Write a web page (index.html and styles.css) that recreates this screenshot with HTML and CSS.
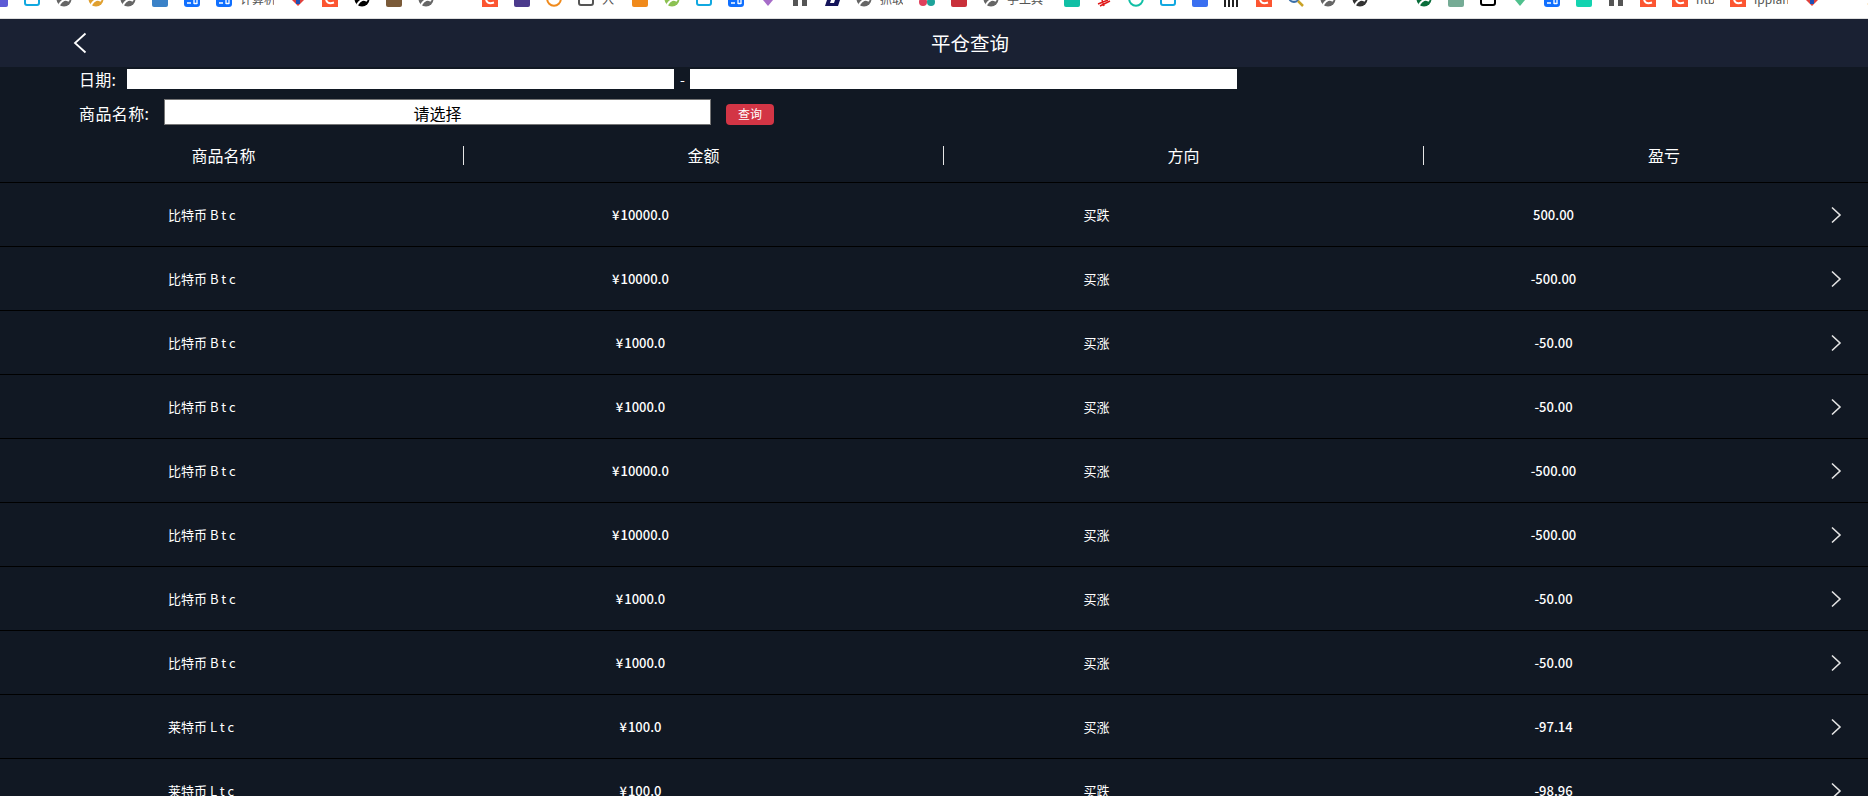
FILE: index.html
```html
<!DOCTYPE html>
<html lang="zh-CN">
<head>
<meta charset="utf-8">
<title>平仓查询</title>
<link rel="stylesheet" href="styles.css">
</head>
<body>
<svg class="defs" width="0" height="0" aria-hidden="true">
  <symbol id="round" viewBox="0 0 16 16"><circle cx="8" cy="8" r="7.5" fill="currentColor"/><path d="M3 14 Q8 6 13 10" stroke="#fff" stroke-width="2" fill="none"/></symbol>
  <symbol id="square" viewBox="0 0 16 16"><rect width="16" height="16" rx="2" fill="currentColor"/></symbol>
  <symbol id="zhi" viewBox="0 0 16 16"><rect width="16" height="16" rx="3" fill="#0f6fff"/><path d="M3 12h4M10 9v4M13 9v4M10 12.500h3" stroke="#fff" stroke-width="1.300" fill="none"/></symbol>
  <symbol id="csdn" viewBox="0 0 16 16"><rect width="16" height="16" fill="#fc5531"/><path d="M12 11.500Q4 14 4 7" stroke="#fff" stroke-width="2" fill="none"/></symbol>
  <symbol id="outline" viewBox="0 0 16 16"><rect x="1" y="-3" width="14" height="17" rx="2" fill="none" stroke="currentColor" stroke-width="2"/></symbol>
  <symbol id="ring" viewBox="0 0 16 16"><circle cx="8" cy="8" r="6.800" fill="none" stroke="currentColor" stroke-width="2"/></symbol>
  <symbol id="tri" viewBox="0 0 16 16"><path d="M3 9h10L8 15z" fill="currentColor"/></symbol>
  <symbol id="shield" viewBox="0 0 16 16"><path d="M2 9h12L8 15z" fill="#e0403c"/><path d="M6 9h4v4H6z" fill="#1e50b4"/></symbol>
  <symbol id="blobs" viewBox="0 0 16 16"><path d="M1 9h5v6H1zM10 9h5v6h-5z" fill="currentColor"/></symbol>
  <symbol id="para" viewBox="0 0 16 16"><path d="M3 9h13l-2 6H1z" fill="currentColor"/><path d="M7 9h4l-1 3H6z" fill="#fff"/></symbol>
  <symbol id="petals" viewBox="0 0 16 16"><circle cx="4" cy="11" r="4" fill="#e0405c"/><circle cx="12" cy="11" r="4" fill="#1ea39a"/></symbol>
  <symbol id="scribble" viewBox="0 0 16 16"><path d="M2 13 12 9M4 15 14 10M6 9l2 6" stroke="#e01a1a" stroke-width="1.500" fill="none"/></symbol>
  <symbol id="lens" viewBox="0 0 16 16"><circle cx="6" cy="6" r="5" fill="#cfe0f0" stroke="#3a6ea8" stroke-width="2"/><path d="M10 10l5 5" stroke="#c9a227" stroke-width="2.500"/></symbol>
</svg>

<nav class="bookmarks">
  <a class="bm first"><svg class="ic c-purple"><use href="#square"/></svg></a>
  <a class="bm"><svg class="ic c-cyan"><use href="#outline"/></svg></a>
  <a class="bm"><svg class="ic c-grey"><use href="#round"/></svg></a>
  <a class="bm"><svg class="ic c-amber"><use href="#round"/></svg></a>
  <a class="bm"><svg class="ic c-grey"><use href="#round"/></svg></a>
  <a class="bm"><svg class="ic c-steel"><use href="#square"/></svg></a>
  <a class="bm"><svg class="ic"><use href="#zhi"/></svg></a>
  <a class="bm"><svg class="ic"><use href="#zhi"/></svg><span class="bm-label w-34">计算机</span></a>
  <a class="bm"><svg class="ic"><use href="#shield"/></svg></a>
  <a class="bm"><svg class="ic"><use href="#csdn"/></svg></a>
  <a class="bm"><svg class="ic c-black"><use href="#round"/></svg></a>
  <a class="bm"><svg class="ic c-brown"><use href="#square"/></svg></a>
  <a class="bm"><svg class="ic c-grey"><use href="#round"/></svg></a>
  <a class="bm"><span class="dots"></span></a>
  <a class="bm"><svg class="ic"><use href="#csdn"/></svg></a>
  <a class="bm"><svg class="ic c-indigo"><use href="#square"/></svg></a>
  <a class="bm"><svg class="ic c-orange"><use href="#ring"/></svg></a>
  <a class="bm"><svg class="ic c-darkgrey"><use href="#outline"/></svg><span class="bm-label w-14">入</span></a>
  <a class="bm"><svg class="ic c-orange"><use href="#square"/></svg></a>
  <a class="bm"><svg class="ic c-lime"><use href="#round"/></svg></a>
  <a class="bm"><svg class="ic c-cyan"><use href="#outline"/></svg></a>
  <a class="bm"><svg class="ic"><use href="#zhi"/></svg></a>
  <a class="bm"><svg class="ic c-violet"><use href="#tri"/></svg></a>
  <a class="bm"><svg class="ic c-darkgrey"><use href="#blobs"/></svg></a>
  <a class="bm"><svg class="ic c-navy"><use href="#para"/></svg></a>
  <a class="bm"><svg class="ic c-grey"><use href="#round"/></svg><span class="bm-label w-23">抓取</span></a>
  <a class="bm"><svg class="ic"><use href="#petals"/></svg></a>
  <a class="bm"><svg class="ic c-red"><use href="#square"/></svg></a>
  <a class="bm"><svg class="ic c-grey"><use href="#round"/></svg><span class="bm-label w-41">学工具</span></a>
  <a class="bm"><svg class="ic c-teal"><use href="#square"/></svg></a>
  <a class="bm"><svg class="ic"><use href="#scribble"/></svg></a>
  <a class="bm"><svg class="ic c-teal"><use href="#ring"/></svg></a>
  <a class="bm"><svg class="ic c-cyan"><use href="#outline"/></svg></a>
  <a class="bm"><svg class="ic c-royal"><use href="#square"/></svg></a>
  <a class="bm"><span class="bars"></span></a>
  <a class="bm"><svg class="ic"><use href="#csdn"/></svg></a>
  <a class="bm"><svg class="ic"><use href="#lens"/></svg></a>
  <a class="bm"><svg class="ic c-grey"><use href="#round"/></svg></a>
  <a class="bm"><svg class="ic c-ink"><use href="#round"/></svg></a>
  <a class="bm"><span class="dots grey"></span></a>
  <a class="bm"><svg class="ic c-forest"><use href="#round"/></svg></a>
  <a class="bm"><svg class="ic c-sage"><use href="#square"/></svg></a>
  <a class="bm"><svg class="ic c-black"><use href="#outline"/></svg></a>
  <a class="bm"><svg class="ic c-vue"><use href="#tri"/></svg></a>
  <a class="bm"><svg class="ic"><use href="#zhi"/></svg></a>
  <a class="bm"><svg class="ic c-mint"><use href="#square"/></svg></a>
  <a class="bm"><svg class="ic c-darkgrey"><use href="#blobs"/></svg></a>
  <a class="bm"><svg class="ic"><use href="#csdn"/></svg></a>
  <a class="bm"><svg class="ic"><use href="#csdn"/></svg><span class="bm-label w-18">htb</span></a>
  <a class="bm"><svg class="ic"><use href="#csdn"/></svg><span class="bm-label w-34">ippian</span></a>
  <a class="bm"><svg class="ic"><use href="#shield"/></svg></a>
  <a class="bm last"><span class="bm-label">入</span></a>
</nav>

<header class="topbar">
  <svg class="back" width="14" height="22" viewBox="0 0 14 22"><path d="M12.500 1.500 2 11 12.500 20.500" fill="none" stroke="#fff" stroke-width="1.800"/></svg>
  <h1 class="title">平仓查询</h1>
</header>

<form class="filters">
  <div class="filter-row date-row">
    <label class="label date-label">日期:</label>
    <input class="date-input" type="text" aria-label="开始日期">
    <span class="dash">-</span>
    <input class="date-input" type="text" aria-label="结束日期">
  </div>
  <div class="filter-row goods-row">
    <label class="label goods-label">商品名称:</label>
    <input class="goods-select" type="text" value="请选择" readonly>
    <button class="query" type="button">查询</button>
  </div>
</form>

<div class="table-head">
  <div class="head-cell">商品名称</div>
  <div class="head-cell">金额</div>
  <div class="head-cell">方向</div>
  <div class="head-cell">盈亏</div>
</div>

<main class="rows">
  <div class="row"><div class="name">比特币 <span class="sym">Btc</span></div><div class="cell num"><span class="yen">¥</span>10000.0</div><div class="cell">买跌</div><div class="cell num">500.00</div><svg class="more" width="12" height="18" viewBox="0 0 12 18"><path d="M2 1.500 10 9 2 16.500"/></svg></div>
  <div class="row"><div class="name">比特币 <span class="sym">Btc</span></div><div class="cell num"><span class="yen">¥</span>10000.0</div><div class="cell">买涨</div><div class="cell num">-500.00</div><svg class="more" width="12" height="18" viewBox="0 0 12 18"><path d="M2 1.500 10 9 2 16.500"/></svg></div>
  <div class="row"><div class="name">比特币 <span class="sym">Btc</span></div><div class="cell num"><span class="yen">¥</span>1000.0</div><div class="cell">买涨</div><div class="cell num">-50.00</div><svg class="more" width="12" height="18" viewBox="0 0 12 18"><path d="M2 1.500 10 9 2 16.500"/></svg></div>
  <div class="row"><div class="name">比特币 <span class="sym">Btc</span></div><div class="cell num"><span class="yen">¥</span>1000.0</div><div class="cell">买涨</div><div class="cell num">-50.00</div><svg class="more" width="12" height="18" viewBox="0 0 12 18"><path d="M2 1.500 10 9 2 16.500"/></svg></div>
  <div class="row"><div class="name">比特币 <span class="sym">Btc</span></div><div class="cell num"><span class="yen">¥</span>10000.0</div><div class="cell">买涨</div><div class="cell num">-500.00</div><svg class="more" width="12" height="18" viewBox="0 0 12 18"><path d="M2 1.500 10 9 2 16.500"/></svg></div>
  <div class="row"><div class="name">比特币 <span class="sym">Btc</span></div><div class="cell num"><span class="yen">¥</span>10000.0</div><div class="cell">买涨</div><div class="cell num">-500.00</div><svg class="more" width="12" height="18" viewBox="0 0 12 18"><path d="M2 1.500 10 9 2 16.500"/></svg></div>
  <div class="row"><div class="name">比特币 <span class="sym">Btc</span></div><div class="cell num"><span class="yen">¥</span>1000.0</div><div class="cell">买涨</div><div class="cell num">-50.00</div><svg class="more" width="12" height="18" viewBox="0 0 12 18"><path d="M2 1.500 10 9 2 16.500"/></svg></div>
  <div class="row"><div class="name">比特币 <span class="sym">Btc</span></div><div class="cell num"><span class="yen">¥</span>1000.0</div><div class="cell">买涨</div><div class="cell num">-50.00</div><svg class="more" width="12" height="18" viewBox="0 0 12 18"><path d="M2 1.500 10 9 2 16.500"/></svg></div>
  <div class="row"><div class="name">莱特币 <span class="sym">Ltc</span></div><div class="cell num"><span class="yen">¥</span>100.0</div><div class="cell">买涨</div><div class="cell num">-97.14</div><svg class="more" width="12" height="18" viewBox="0 0 12 18"><path d="M2 1.500 10 9 2 16.500"/></svg></div>
  <div class="row"><div class="name">莱特币 <span class="sym">Ltc</span></div><div class="cell num"><span class="yen">¥</span>100.0</div><div class="cell">买跌</div><div class="cell num">-98.96</div><svg class="more" width="12" height="18" viewBox="0 0 12 18"><path d="M2 1.500 10 9 2 16.500"/></svg></div>
</main>
</body>
</html>
```

FILE: styles.css
```css
* { box-sizing: border-box; }

html, body {
  height: 796px;
  overflow: hidden;
}

body {
  margin: 0;
  background: #111823;
  color: #fff;
  font-family: "Noto Sans CJK SC", "Liberation Sans", sans-serif;
}

.defs { display: block; height: 0; }

/* Browser bookmark strip, cropped at the top */
.bookmarks {
  display: flex;
  height: 19px;
  background: #fff;
  border-bottom: 1px solid #dedede;
  overflow: hidden;
  white-space: nowrap;
}

.bm {
  display: flex;
  flex: none;
  gap: 8px;
  margin-top: -9px;
  margin-right: 16px;
  height: 16px;
}

.bm.first { margin-left: -8px; }
.bm.last { margin-left: 31px; }

.ic { display: block; flex: none; width: 16px; height: 16px; }

.bm-label {
  display: block;
  flex: none;
  font-size: 12px;
  line-height: 16px;
  color: #555;
  overflow: hidden;
}

.w-14 { width: 14px; }
.w-18 { width: 18px; }
.w-23 { width: 23px; }
.w-34 { width: 34px; }
.w-41 { width: 41px; }

.dots {
  display: block;
  width: 16px;
  height: 16px;
  border-bottom: 2px dotted #e0455f;
  transform: translateY(-10px);
}
.dots.grey { border-color: #999; }

.bars {
  display: block;
  width: 16px;
  height: 16px;
  background: repeating-linear-gradient(90deg, #222 0 2px, #fff 2px 4px);
}

.c-purple { color: #5d5bd6; }
.c-cyan { color: #11a8e0; }
.c-grey { color: #666; }
.c-amber { color: #e0a030; }
.c-steel { color: #3a82c8; }
.c-black { color: #000; }
.c-brown { color: #7a5a38; }
.c-indigo { color: #4b3a8c; }
.c-orange { color: #f08a1c; }
.c-darkgrey { color: #555; }
.c-lime { color: #8cc152; }
.c-violet { color: #a66cc8; }
.c-navy { color: #14145a; }
.c-red { color: #c9303a; }
.c-teal { color: #10bfa5; }
.c-royal { color: #3a6ff0; }
.c-ink { color: #333; }
.c-forest { color: #0b6e3c; }
.c-sage { color: #75ab95; }
.c-vue { color: #4fc08d; }
.c-mint { color: #13d3b0; }

/* Title bar */
.topbar {
  position: relative;
  display: flex;
  align-items: center;
  justify-content: center;
  height: 48px;
  padding-left: 72px;
  background: #1a2133;
}

.back {
  position: absolute;
  left: 73px;
  top: 13px;
}

.title {
  margin: 0;
  font-size: 19.500px;
  font-weight: 400;
  line-height: 48px;
}

/* Filter form */
.filters { padding-top: 2px; }

.filter-row { display: flex; align-items: center; }

.date-row { height: 20px; padding-left: 79px; }

.goods-row {
  height: 26px;
  margin-top: 10px;
  padding-left: 79px;
}

.label { font-size: 16px; line-height: 20px; white-space: nowrap; }

.date-label { width: 48px; letter-spacing: .3px; }
.goods-label { width: 85px; margin-top: 2px; letter-spacing: .4px; }

.date-input {
  width: 547px;
  height: 20px;
  padding: 0;
  border: 0;
  background: #fff;
}

.dash {
  width: 16px;
  padding-left: 1px;
  text-align: center;
  font-size: 14px;
  line-height: 20px;
}

.goods-select {
  width: 547px;
  height: 26px;
  padding: 2px 0 0;
  border: 1px solid #767676;
  background: #fff;
  color: #000;
  font: 16px/22px "Noto Sans CJK SC", "Liberation Sans", sans-serif;
  text-align: center;
}

.query {
  align-self: flex-end;
  width: 48px;
  height: 21px;
  margin-left: 15px;
  padding: 0 0 1px;
  border: 0;
  border-radius: 4px;
  background: #d33545;
  color: #fff;
  font: 12px/20px "Noto Sans CJK SC", "Liberation Sans", sans-serif;
}

/* Table */
.table-head {
  display: grid;
  grid-template-columns: repeat(4, 480px);
  align-items: center;
  width: 1920px;
  height: 58px;
  margin-left: -16px;
  padding-top: 4px;
  border-bottom: 1px solid #000;
}

.head-cell {
  height: 19px;
  border-right: 1px solid #e6e6e6;
  font-size: 16px;
  line-height: 19px;
  text-align: center;
}

.head-cell:last-child { border-right: 0; }

.row {
  display: grid;
  grid-template-columns: 413px 455px 457px 457px 1fr;
  align-items: center;
  height: 64px;
  border-bottom: 1px solid #000;
  font-size: 13px;
}

.name { padding-left: 168px; white-space: nowrap; }

.sym { letter-spacing: 3px; }

.cell { text-align: center; white-space: nowrap; }

.num { font-weight: 500; }

.yen { margin-right: 1px; }

.more {
  margin-left: 48px;
  fill: none;
  stroke: #e4e4e4;
  stroke-width: 1.600;
}
```
